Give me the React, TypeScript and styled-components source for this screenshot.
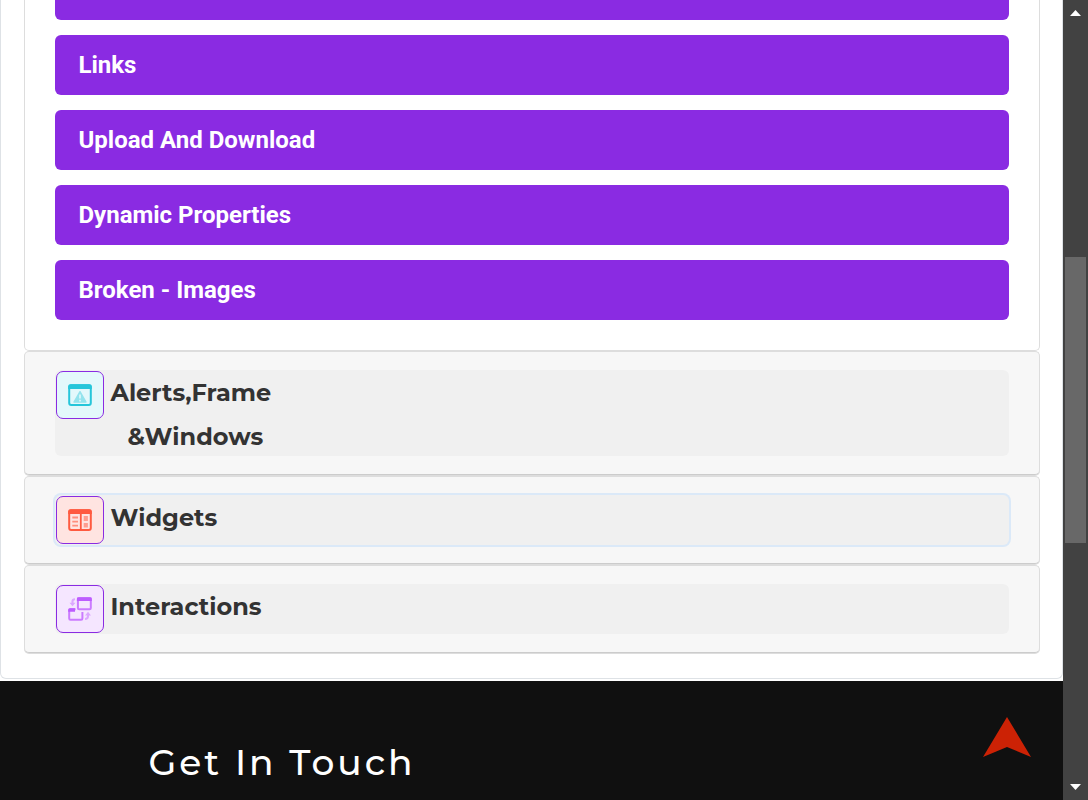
import React from "react";
import styled, { createGlobalStyle } from "styled-components";

const Global = createGlobalStyle`
  * { box-sizing: border-box; }
  html, body { margin: 0; height: 100%; overflow: hidden; background: #fff; }
  button { border: 0; margin: 0; text-align: left; cursor: pointer; }
`;

const Screen = styled.div`
  display: flex;
  width: 1088px;
  height: 800px;
  overflow: hidden;
`;

const Page = styled.main`
  display: flex;
  flex-direction: column;
  width: 1063px;
  height: 800px;
`;

const Panel = styled.section`
  flex: none;
  height: 679px;
  margin-bottom: 2px;
  padding: 0 22px 0 23px;
  border: 1px solid #dee2e6;
  border-top: 0;
  border-radius: 0 0 6px 6px;
`;

const OpenCard = styled.div`
  display: flex;
  flex-direction: column;
  gap: 15px;
  height: 351px;
  padding: 0 30px 30px;
  border: 1px solid #ddd;
  border-top: 0;
  border-radius: 0 0 5px 5px;
`;

const Topic = styled.button<{ $cut?: boolean }>`
  flex: none;
  height: ${(p) => (p.$cut ? 20 : 60)}px;
  padding: 0 23.5px;
  border-radius: ${(p) => (p.$cut ? "0 0 6px 6px" : "6px")};
  background: #8a2be2;
  color: #fff;
  font: 700 24px/60px Roboto, sans-serif;
`;

const Card = styled.div<{ $height: number }>`
  height: ${(p) => p.$height}px;
  padding: 18px 30px 0;
  border: 1px solid #ddd;
  border-bottom-color: #ccc;
  border-radius: 5px;
  background: #f7f7f7;
  box-shadow: 0 1px 0 #ddd;
  margin-bottom: 1px;
`;

const Toggle = styled.button<{ $height: number; $focus?: boolean }>`
  display: flex;
  width: 100%;
  height: ${(p) => p.$height}px;
  padding: 1px;
  gap: 6.5px;
  border-radius: 6px;
  background: #f0f0f0;
  box-shadow: ${(p) => (p.$focus ? "0 0 0 2px #dbe9f8" : "none")};
`;

const IconBox = styled.span<{ $tint: string }>`
  display: grid;
  place-items: center;
  flex: none;
  width: 48px;
  height: 48px;
  border: 1px solid #8a2be2;
  border-radius: 7px;
  background: ${(p) => p.$tint};
`;

const Label = styled.span`
  display: flex;
  flex-direction: column;
  align-items: flex-start;
  color: #333;
  font: 700 24px/44px Montserrat, Inter, sans-serif;
  white-space: nowrap;
`;

const Line = styled.span<{ $indent?: number }>`
  margin-left: ${(p) => p.$indent ?? 0}px;
`;

const Footer = styled.footer`
  display: flex;
  flex: 1;
  justify-content: space-between;
  align-items: flex-start;
  padding: 36px 32px 0 148.5px;
  background: #101010;
`;

const Heading = styled.h2`
  margin: 23px 0 0;
  color: #fff;
  font: 500 36px/44px Montserrat, Inter, sans-serif;
  letter-spacing: 3px;
  white-space: nowrap;
`;

const Scrollbar = styled.aside`
  display: flex;
  flex-direction: column;
  align-items: center;
  width: 25px;
  height: 800px;
  padding: 10px 2px 9px;
  background: #424242;
`;

const Thumb = styled.div`
  width: 21px;
  height: 286px;
  margin: 241px 0 241px;
  background: #686868;
`;

const AlertIcon = () => (
  <svg width="24" height="24" viewBox="0 0 24 24">
    <rect x="1.2" y="2.2" width="21.6" height="19.9" rx="2" fill="none" stroke="#26c6da" strokeWidth="2" />
    <path d="M.2 6V3.5Q.2 1.2 2.6 1.2h18.8q2.4 0 2.4 2.3V6z" fill="#26c6da" />
    <path d="M12 8.7 18 19H6z" fill="#93e3ed" stroke="#93e3ed" strokeWidth="1.4" strokeLinejoin="round" />
    <path d="M12 11.5v4M12 16.8v1.7" stroke="#e3f8fb" strokeWidth="1.6" />
  </svg>
);

const WidgetIcon = () => (
  <svg width="24" height="24" viewBox="0 0 24 24">
    <rect x="1.2" y="2.2" width="21.6" height="19.9" rx="2" fill="none" stroke="#ff5a40" strokeWidth="2" />
    <path d="M.2 6V3.5Q.2 1.2 2.6 1.2h18.8q2.4 0 2.4 2.3V6z" fill="#ff5a40" />
    <path d="M12.8 5v17" stroke="#ff5a40" strokeWidth="1.8" />
    <path d="M4.3 9.5H10M4.3 13.6H10M4.3 17.7H10" stroke="#ff8e7d" strokeWidth="1.8" />
    <path d="M15.7 8h4.2v5h-4.2zM15.7 15h4.2v4.5h-4.2z" fill="#ff9d8f" />
  </svg>
);

const InteractionIcon = () => (
  <svg width="24" height="24" viewBox="0 0 24 24">
    <g fill="none" stroke="#cb7bff" strokeWidth="2">
      <rect x="9.9" y="1.2" width="12.9" height="11" rx="1.3" />
      <path d="M7.6 12.2H2.4Q1.2 12.2 1.2 13.4v8.1q0 1.3 1.3 1.3h10.6q1.3 0 1.3-1.3V15" />
    </g>
    <path d="M8.9 4V1.5Q8.9.2 10.3.2h12q1.5 0 1.5 1.3V4zM.2 14.7V12.7Q.2 11.2 1.8 11.2H7v3.5z" fill="#bd5cff" />
    <path d="M7 2.3Q4.5 2.3 4.5 4.5V7M17 22q3 0 3-3v-2" fill="none" stroke="#dca7ff" strokeWidth="2.1" />
    <path d="M1.5 5.7h6L4.5 9.3zM17 18.5h6L20 14.8z" fill="#dca7ff" />
  </svg>
);

const UpArrow = () => (
  <svg width="48" height="41" viewBox="0 0 48 41">
    <path d="M24 0 48 40 24 30 0 40z" fill="#cc2205" />
  </svg>
);

const Caret = ({ down }: { down?: boolean }) => (
  <svg width="11" height="6" viewBox="0 0 11 6">
    <path d={down ? "M0 0h11L5.5 6z" : "M0 6h11L5.5 0z"} fill="#fff" />
  </svg>
);

const topics = ["Links", "Upload And Download", "Dynamic Properties", "Broken - Images"];

export default function App() {
  return (
    <Screen>
      <Global />
      <Page>
        <Panel>
          <OpenCard>
            <Topic $cut aria-hidden />
            {topics.map((t) => (
              <Topic key={t}>{t}</Topic>
            ))}
          </OpenCard>
          <Card $height={124}>
            <Toggle $height={86}>
              <IconBox $tint="#e3f8fb"><AlertIcon /></IconBox>
              <Label>
                <Line>Alerts,Frame</Line>
                <Line $indent={17}>&amp;Windows</Line>
              </Label>
            </Toggle>
          </Card>
          <Card $height={88}>
            <Toggle $height={50} $focus>
              <IconBox $tint="#ffe4e1"><WidgetIcon /></IconBox>
              <Label><Line>Widgets</Line></Label>
            </Toggle>
          </Card>
          <Card $height={88}>
            <Toggle $height={50}>
              <IconBox $tint="#f5e6ff"><InteractionIcon /></IconBox>
              <Label><Line>Interactions</Line></Label>
            </Toggle>
          </Card>
        </Panel>
        <Footer>
          <Heading>Get In Touch</Heading>
          <UpArrow />
        </Footer>
      </Page>
      <Scrollbar>
        <Caret />
        <Thumb />
        <Caret down />
      </Scrollbar>
    </Screen>
  );
}
